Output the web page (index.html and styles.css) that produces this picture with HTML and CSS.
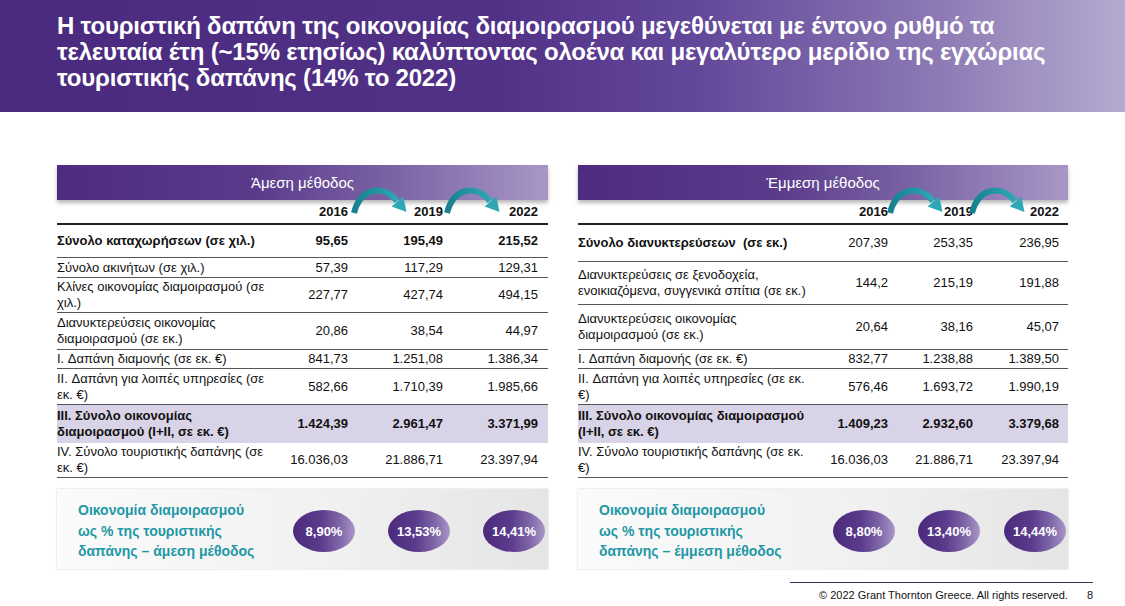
FILE: index.html
```html
<!DOCTYPE html>
<html lang="el">
<head>
<meta charset="utf-8">
<title>Οικονομία διαμοιρασμού</title>
<link rel="stylesheet" href="styles.css">
</head>
<body>
<header class="hero">
  <h1 class="hero-title">Η τουριστική δαπάνη της οικονομίας διαμοιρασμού μεγεθύνεται με έντονο ρυθμό τα<br>τελευταία έτη (~15% ετησίως) καλύπτοντας ολοένα και μεγαλύτερο μερίδιο της εγχώριας<br>τουριστικής δαπάνης (14% το 2022)</h1>
</header>

<main class="panels">
  <section class="panel panel-left">
    <div class="panel-bar">Άμεση μέθοδος</div>
    <svg class="arrow arrow-l1" viewBox="0 0 64 30" width="64" height="30" aria-hidden="true">
      <defs><linearGradient id="ag1" x1="0" y1="0" x2="1" y2="0"><stop offset="0" stop-color="#17808d"/><stop offset="1" stop-color="#2fa7b4"/></linearGradient></defs>
      <path d="M4 28 C10 4, 32 -2, 47 16" fill="none" stroke="url(#ag1)" stroke-width="6"/>
      <polygon points="41.6,21.5 53.4,11.5 56.5,27" fill="#2fa7b4"/>
    </svg>
    <svg class="arrow arrow-l2" viewBox="0 0 64 30" width="66" height="30" aria-hidden="true">
      <path d="M4 28 C10 4, 32 -2, 47 16" fill="none" stroke="url(#ag1)" stroke-width="6"/>
      <polygon points="41.6,21.5 53.4,11.5 56.5,27" fill="#2fa7b4"/>
    </svg>
    <div class="table table-l">
      <div class="row head"><span></span><span>2016</span><span>2019</span><span>2022</span></div>
      <div class="row h33 strong"><span>Σύνολο καταχωρήσεων (σε χιλ.)</span><span>95,65</span><span>195,49</span><span>215,52</span></div>
      <div class="row h20"><span>Σύνολο ακινήτων (σε χιλ.)</span><span>57,39</span><span>117,29</span><span>129,31</span></div>
      <div class="row h35"><span>Κλίνες οικονομίας διαμοιρασμού (σε χιλ.)</span><span>227,77</span><span>427,74</span><span>494,15</span></div>
      <div class="row h37"><span>Διανυκτερεύσεις οικονομίας διαμοιρασμού (σε εκ.)</span><span>20,86</span><span>38,54</span><span>44,97</span></div>
      <div class="row h19"><span>I. Δαπάνη διαμονής (σε εκ. €)</span><span>841,73</span><span>1.251,08</span><span>1.386,34</span></div>
      <div class="row h36"><span>II. Δαπάνη για λοιπές υπηρεσίες (σε εκ. €)</span><span>582,66</span><span>1.710,39</span><span>1.985,66</span></div>
      <div class="row h38 strong total"><span>III. Σύνολο οικονομίας διαμοιρασμού (I+II, σε εκ. €)</span><span>1.424,39</span><span>2.961,47</span><span>3.371,99</span></div>
      <div class="row h35"><span>IV. Σύνολο τουριστικής δαπάνης (σε εκ. €)</span><span>16.036,03</span><span>21.886,71</span><span>23.397,94</span></div>
    </div>
    <div class="summary summary-l">
      <p class="summary-text">Οικονομία διαμοιρασμού<br>ως % της τουριστικής<br>δαπάνης – άμεση μέθοδος</p>
      <span class="pill">8,90%</span>
      <span class="pill">13,53%</span>
      <span class="pill">14,41%</span>
    </div>
  </section>

  <section class="panel panel-right">
    <div class="panel-bar">Έμμεση μέθοδος</div>
    <svg class="arrow arrow-r1" viewBox="0 0 64 30" width="64" height="30" aria-hidden="true">
      <path d="M4 28 C10 4, 32 -2, 47 16" fill="none" stroke="url(#ag1)" stroke-width="6"/>
      <polygon points="41.6,21.5 53.4,11.5 56.5,27" fill="#2fa7b4"/>
    </svg>
    <svg class="arrow arrow-r2" viewBox="0 0 64 30" width="72" height="30" aria-hidden="true">
      <path d="M4 28 C10 4, 32 -2, 47 16" fill="none" stroke="url(#ag1)" stroke-width="6"/>
      <polygon points="41.6,21.5 53.4,11.5 56.5,27" fill="#2fa7b4"/>
    </svg>
    <div class="table table-r">
      <div class="row head"><span></span><span>2016</span><span>2019</span><span>2022</span></div>
      <div class="row h37 strong-label"><span>Σύνολο διανυκτερεύσεων&nbsp; (σε εκ.)</span><span>207,39</span><span>253,35</span><span>236,95</span></div>
      <div class="row h43"><span>Διανυκτερεύσεις σε ξενοδοχεία, ενοικιαζόμενα, συγγενικά σπίτια (σε εκ.)</span><span>144,2</span><span>215,19</span><span>191,88</span></div>
      <div class="row h45"><span>Διανυκτερεύσεις οικονομίας διαμοιρασμού (σε εκ.)</span><span>20,64</span><span>38,16</span><span>45,07</span></div>
      <div class="row h19"><span>I. Δαπάνη διαμονής (σε εκ. €)</span><span>832,77</span><span>1.238,88</span><span>1.389,50</span></div>
      <div class="row h36"><span>II. Δαπάνη για λοιπές υπηρεσίες (σε εκ. €)</span><span>576,46</span><span>1.693,72</span><span>1.990,19</span></div>
      <div class="row h38 strong total"><span>III. Σύνολο οικονομίας διαμοιρασμού (I+II, σε εκ. €)</span><span>1.409,23</span><span>2.932,60</span><span>3.379,68</span></div>
      <div class="row h35"><span>IV. Σύνολο τουριστικής δαπάνης (σε εκ. €)</span><span>16.036,03</span><span>21.886,71</span><span>23.397,94</span></div>
    </div>
    <div class="summary summary-r">
      <p class="summary-text">Οικονομία διαμοιρασμού<br>ως % της τουριστικής<br>δαπάνης – έμμεση μέθοδος</p>
      <span class="pill">8,80%</span>
      <span class="pill">13,40%</span>
      <span class="pill">14,44%</span>
    </div>
  </section>
</main>

<footer class="footer">
  <div class="footer-inner">
    <span class="copy">© 2022 Grant Thornton Greece. All rights reserved.</span>
    <span class="page">8</span>
  </div>
</footer>
</body>
</html>
```

FILE: styles.css
```css
* { box-sizing: border-box; }
html, body { margin: 0; padding: 0; }
body {
  width: 1125px;
  height: 606px;
  overflow: hidden;
  background: #ffffff;
  font-family: "Liberation Sans", Arial, sans-serif;
  color: #111;
}

.hero {
  height: 112px;
  padding: 13px 0 0 57px;
  background: linear-gradient(90deg, #4a2a7e 0%, #523287 45%, #63489a 62%, #8a76b3 82%, #b4aacf 100%);
}
.hero-title {
  margin: 0;
  color: #fff;
  font-family: "Liberation Sans", Arial, sans-serif;
  font-weight: bold;
  font-size: 24px;
  letter-spacing: -0.2px;
  line-height: 26px;
  white-space: nowrap;
}

.panels {
  display: grid;
  grid-template-columns: 491px 490px;
  column-gap: 30px;
  padding: 53px 0 0 57px;
}

.panel { position: relative; }

.panel-bar {
  height: 35px;
  display: flex;
  align-items: center;
  justify-content: center;
  color: #fff;
  font-size: 15px;
  padding-bottom: 1px;
  background: linear-gradient(90deg, #4d2c80 0%, #5a3a8b 40%, #7d66a6 70%, #a897c6 100%);
  box-shadow: 0 3px 4px rgba(0,0,0,0.28);
}

.arrow {
  position: absolute;
  top: 20px;
  overflow: visible;
}
.arrow-l1 { left: 293px; }
.arrow-l2 { left: 385px; }
.arrow-r1 { left: 308px; }
.arrow-r2 { left: 386px; }

.table { font-size: 13px; line-height: 16px; }
.row {
  display: grid;
  align-items: center;
  border-bottom: 1px solid #555;
}
.table-l .row { grid-template-columns: 213px 78px 95px 95px; padding-right: 10px; }
.table-r .row { grid-template-columns: 230px 80px 85px 86px; padding-right: 9px; }
.row span:not(:first-child) { text-align: right; }

.row.head {
  height: 25px;
  font-weight: bold;
  align-items: end;
  padding-bottom: 3px;
  border-bottom: 2px solid #222;
}
.strong { font-weight: bold; }
.strong-label span:first-child { font-weight: bold; }
.total { background: #d9d3e7; border-bottom: none; }

.h19 { height: 19px; }
.h20 { height: 20px; }
.h33 { height: 33px; }
.h35 { height: 35px; }
.h36 { height: 36px; }
.h37 { height: 37px; }
.h38 { height: 38px; }
.h43 { height: 43px; }
.h45 { height: 45px; }

.summary {
  margin-top: 11px;
  height: 80px;
  display: grid;
  align-items: center;
  padding-top: 4px;
  background: linear-gradient(90deg, #fbfbfb 0%, #f1f1f1 55%, #e5e5e5 100%);
  box-shadow: 0 0 2px rgba(0,0,0,0.2);
}
.summary-l { grid-template-columns: 213px 85px 95px 95px; padding-right: 3px; }
.summary-r { grid-template-columns: 230px 87px 85px 86px; padding-right: 2px; }
.summary-text {
  margin: 0;
  padding-left: 21px;
  color: #1f98a6;
  font-weight: bold;
  font-size: 14px;
  line-height: 20.5px;
  white-space: nowrap;
}
.pill {
  justify-self: end;
  width: 62px;
  height: 42px;
  border-radius: 50%;
  display: flex;
  align-items: center;
  justify-content: center;
  color: #fff;
  font-weight: bold;
  font-size: 13px;
  background: linear-gradient(90deg, #4b2a7d 0%, #5b3b8c 45%, #7e66a8 75%, #a996c8 100%);
}

.footer {
  padding: 13px 32px 0 790px;
}
.footer-inner {
  border-top: 1.5px solid #3b2d5c;
  display: flex;
  justify-content: flex-end;
  align-items: center;
  gap: 19px;
  padding-top: 6px;
  font-size: 11px;
  color: #111;
}
```
